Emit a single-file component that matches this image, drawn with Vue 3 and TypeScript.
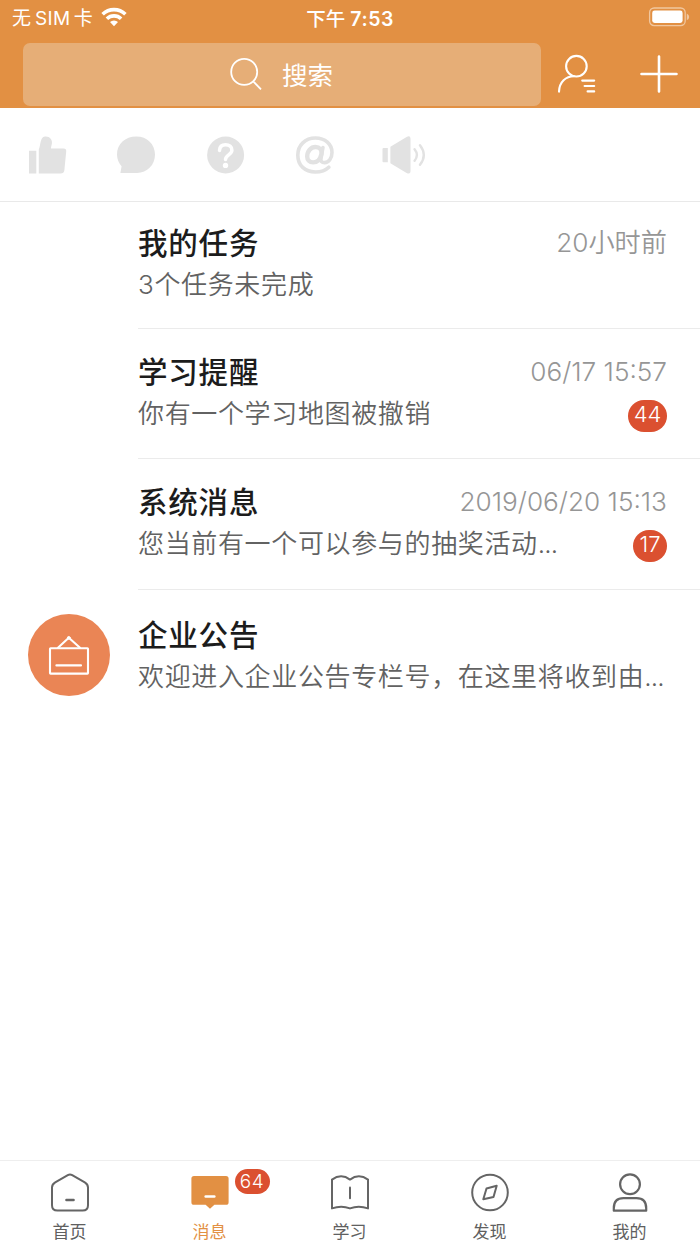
<script setup lang="ts">
interface Message {
  id: string
  title: string
  text: string
  truncated?: boolean
  time?: string
  unread?: number
  avatar?: boolean
}

interface Tab {
  id: string
  label: string
  badge?: number
}

const messages: Message[] = [
  { id: 'tasks', title: '我的任务', text: '3个任务未完成', time: '20小时前' },
  { id: 'study', title: '学习提醒', text: '你有一个学习地图被撤销', time: '06/17 15:57', unread: 44 },
  { id: 'system', title: '系统消息', text: '您当前有一个可以参与的抽奖活动', truncated: true, time: '2019/06/20 15:13', unread: 17 },
  { id: 'notice', title: '企业公告', text: '欢迎进入企业公告专栏号，在这里将收到由', truncated: true, avatar: true },
]

const tabs: Tab[] = [
  { id: 'home', label: '首页' },
  { id: 'message', label: '消息', badge: 64 },
  { id: 'learn', label: '学习' },
  { id: 'discover', label: '发现' },
  { id: 'me', label: '我的' },
]

const activeTab = 'message'
</script>

<template>
  <div class="screen">
    <header class="header">
      <div class="status">
        <div class="carrier">
          <span class="carrier-name">无<span class="sim">SIM</span>卡</span>
          <svg class="wifi" width="26" height="20" viewBox="0 0 26 20">
            <g fill="none" stroke="#fff" stroke-width="3.6">
              <path d="M1.6 7.2A16.4 16.4 0 0 1 24.4 7.2" />
              <path d="M5.9 11.8A10.2 10.2 0 0 1 20.1 11.8" />
            </g>
            <path d="M9 15a5.8 5.8 0 0 1 8 0L13 19.2z" fill="#fff" />
          </svg>
        </div>
        <div class="clock">下午 <span>7:53</span></div>
        <svg class="battery" width="42" height="20" viewBox="0 0 42 20">
          <rect x="1.6" y="1" width="35.6" height="17.6" rx="4.5" fill="none" stroke="#f1c79f" stroke-width="1.3" />
          <rect x="4.2" y="3.6" width="30.4" height="12.4" rx="2.4" fill="#fff" />
          <path d="M38.8 6.6q2.4 1.2 2.4 3.3t-2.4 3.3z" fill="#f1c79f" />
        </svg>
      </div>
      <div class="toolbar">
        <div class="search">
          <svg width="34" height="34" viewBox="0 0 34 34" fill="none" stroke="#fff" stroke-width="1.8">
            <circle cx="15.2" cy="14.9" r="13" />
            <path d="M24.2 24.3 32 32.3" />
          </svg>
          <span>搜索</span>
        </div>
        <svg class="contacts" width="40" height="40" viewBox="0 0 40 40" fill="none" stroke="#fff" stroke-width="2.1" stroke-linecap="round">
          <circle cx="19.4" cy="12.2" r="10.3" />
          <path d="M2 37.6C2.4 28 8.8 22.3 17 22.3M25.2 26.6H37.2M27.6 32H37.2M30.6 37.4H37.2" />
        </svg>
        <svg class="plus" width="38" height="38" viewBox="0 0 38 38" stroke="#fff" stroke-width="2.6" stroke-linecap="round">
          <path d="M1.5 19H36.5M19 1.5V36.5" />
        </svg>
      </div>
    </header>

    <nav class="filters">
      <svg width="38" height="38" viewBox="0 0 38 38" fill="#e2e2e2">
        <path d="M0 14.7H7.3V37.6H0zM9.8 37.6V13.6C10.8 11.2 11 8.6 11.8 5.3C12.8 1.6 14.2 .4 16.8 .4C20.9 .4 23.6 3.9 22.9 7.6C22.6 9.5 22 11 22 12.6H34.6Q37.5 12.6 37.2 15.6L35.4 34Q35 37.6 31.6 37.6z" />
      </svg>
      <svg width="38" height="38" viewBox="0 0 38 38" fill="#e2e2e2">
        <path d="M3.4 36.9 4.6 30.3A18.2 18.2 0 0 1 0 18.5C0 8 8.2 .4 19.2 .4C30.2 .4 38 8.1 38 18.6C38 29.1 30.2 36.9 20 36.9z" />
      </svg>
      <svg width="38" height="38" viewBox="0 0 38 38">
        <circle cx="18.6" cy="19" r="18.5" fill="#e2e2e2" />
        <path d="M12.5 14.4C12.7 10.7 15.2 8.8 18.6 8.8C22.2 8.8 24.9 10.8 24.9 14.2C24.9 18.8 18.5 18.8 18.5 23.4" fill="none" stroke="#fff" stroke-width="3.5" stroke-linecap="round" />
        <circle cx="18.5" cy="29.4" r="2.7" fill="#fff" />
      </svg>
      <svg width="38" height="38" viewBox="0 0 38 38" fill="none" stroke="#e2e2e2" stroke-linecap="round">
        <path d="M32.8 31.2C29.4 34.6 24.8 36 19.4 36C9 36 1.8 29.4 1.8 19.2C1.8 9.2 9.2 2 19.4 2C29.2 2 36 8.2 36 16.4C36 22.8 32.4 26.6 28.6 26.6C25.6 26.6 24.6 25.2 25 22.4L26.9 11.6" stroke-width="3.6" />
        <path d="M25.4 18.2C24.2 23.4 21 26.4 17.2 26.4C13.4 26.4 11.2 24 11.2 20.4C11.2 15 15 11 19.4 11C23.6 11 26.2 13.6 25.4 18.2" stroke-width="4.4" />
      </svg>
      <svg width="44" height="38" viewBox="0 0 44 38">
        <path d="M1.5 12H5.8V26.2H1.5Q.5 26.2 .5 25.2V13Q.5 12 1.5 12zM8.4 10.8 24.6.9Q28.5-.8 28.5 2.8V35.2Q28.5 38.8 24.6 37L8.4 27.2z" fill="#e2e2e2" />
        <path d="M32.6 13.2Q37.2 19 32.6 24.8M38 9.2Q45.6 19 38 28.8" fill="none" stroke="#e2e2e2" stroke-width="2.4" stroke-linecap="round" />
      </svg>
    </nav>

    <main class="list">
      <article v-for="m in messages" :key="m.id" class="row">
        <div class="avatar-slot">
          <div v-if="m.avatar" class="avatar">
            <svg width="42" height="42" viewBox="0 0 42 42" fill="none" stroke="#fff" stroke-width="2.1" stroke-linejoin="round" stroke-linecap="round">
              <rect x="2" y="14.2" width="38" height="25.4" rx=".6" />
              <path d="M10 13.8 20.8 3.8 32 13.8M8.4 31.4H33" />
              <circle cx="20.8" cy="3.9" r="1.4" fill="#fff" stroke-width="1" />
            </svg>
          </div>
        </div>
        <div class="body">
          <div class="line">
            <h2>{{ m.title }}</h2>
            <time v-if="m.time">{{ m.time }}</time>
          </div>
          <div class="line">
            <p>{{ m.text }}<span v-if="m.truncated" class="dots">...</span></p>
            <span v-if="m.unread" class="badge" :class="m.id">{{ m.unread }}</span>
          </div>
        </div>
      </article>
    </main>

    <footer class="tabs">
      <div v-for="t in tabs" :key="t.id" class="tab" :class="{ active: t.id === activeTab }">
        <div class="icon">
          <svg width="40" height="40" viewBox="0 0 40 40" fill="none" stroke="#656565" stroke-width="2" stroke-linejoin="round" stroke-linecap="round">
            <template v-if="t.id === 'home'">
              <path d="M17.8 2.1Q20 .9 22.2 2.1L34.8 9.4Q38 11.3 38 14.6V32.2Q38 37.5 32.6 37.5H7.4Q2 37.5 2 32.2V14.6Q2 11.3 5.2 9.4z" />
              <path d="M16.4 27H23.6" stroke-width="2.4" />
            </template>
            <template v-else-if="t.id === 'message'">
              <path d="M4 3H36Q38.6 3 38.6 5.6V29.2Q38.6 31.8 36 31.8H24.4L20 35.8 15.6 31.8H4Q1.4 31.8 1.4 29.2V5.6Q1.4 3 4 3z" fill="#e29043" stroke="none" />
              <path d="M15.6 23.5H24.4" stroke="#fff" stroke-width="2.4" />
            </template>
            <template v-else-if="t.id === 'learn'">
              <path d="M2 6.6Q11.2.1 20 6.6 28.8.1 38 6.6V35.4Q28.6 32 20 35.4 11.4 32 2 35.4z" />
              <path d="M20 14.5V25.2" />
            </template>
            <template v-else-if="t.id === 'discover'">
              <circle cx="20" cy="19.5" r="17.8" />
              <path d="M26.7 12.8 23.5 24 13.3 26.2 16.5 15.5z" />
            </template>
            <template v-else>
              <circle cx="20" cy="11.2" r="9.9" stroke-width="2.2" />
              <path d="M3.8 37.7V35.2Q3.8 25.1 13.5 25.1H26.5Q36.2 25.1 36.2 35.2V37.7z" stroke-width="2.2" />
            </template>
          </svg>
          <span v-if="t.badge" class="tab-badge">{{ t.badge }}</span>
        </div>
        <span class="label">{{ t.label }}</span>
      </div>
    </footer>
  </div>
</template>

<style>
body {
  margin: 0;
  background: #fff;
}
</style>

<style scoped>
.screen {
  display: flex;
  flex-direction: column;
  width: 700px;
  height: 1244px;
  overflow: hidden;
  background: #fff;
  font-family: Inter, "Noto Sans CJK SC", sans-serif;
  white-space: nowrap;
}

.header {
  height: 108px;
  flex: none;
  background: #e29043;
  color: #fff;
}

.status {
  display: grid;
  grid-template-columns: 1fr auto 1fr;
  height: 36px;
  align-items: center;
  box-sizing: border-box;
  padding: 0 10px 0 12px;
}

.carrier {
  display: flex;
  align-items: center;
  gap: 9px;
  font-size: 19px;
  line-height: 36px;
}

.carrier-name {
  width: 80px;
  padding-top: 1px;
}

.sim {
  margin: 0 3px 0 4px;
  letter-spacing: 0.4px;
}

.wifi {
  margin-top: -3px;
}

.clock {
  margin-left: -2px;
  font-size: 19.5px;
  font-weight: 500;
  line-height: 36px;
}

.clock span {
  font-weight: 600;
  letter-spacing: 0.5px;
}

.battery {
  justify-self: end;
  margin-top: -3px;
}

.toolbar {
  display: flex;
  height: 72px;
}

.search {
  display: flex;
  align-items: center;
  box-sizing: border-box;
  width: 518px;
  height: 63px;
  margin: 7px 0 0 23px;
  padding-left: 206px;
  gap: 19px;
  border-radius: 7px;
  background: #e6ae77;
  font-size: 25.5px;
  line-height: 63px;
}

.search svg {
  margin-top: -2px;
}

.search span {
  padding-top: 1px;
}

.contacts {
  margin: 18px 0 0 16px;
}

.plus {
  margin: 19px 0 0 43px;
}

.filters {
  display: flex;
  flex: none;
  box-sizing: border-box;
  height: 94px;
  padding: 28px 0 0 29px;
  gap: 51px;
  border-bottom: 1px solid #e9e9e9;
}

.filters svg:nth-child(2) {
  margin-left: -1px;
}

.filters svg:nth-child(3) {
  margin-left: 1px;
}

.filters svg:nth-child(5) {
  margin-left: -3px;
}

.list {
  flex: 1;
}

.row {
  display: flex;
  height: 127px;
}

.row:nth-child(2) {
  height: 130px;
}

.row:nth-child(3) {
  height: 131px;
}

.avatar-slot {
  width: 110px;
  margin-right: 28px;
}

.avatar {
  display: flex;
  align-items: center;
  justify-content: center;
  width: 82px;
  height: 82px;
  margin: 23.5px 0 0 28px;
  border-radius: 50%;
  background: #ea8555;
}

.body {
  flex: 1;
  box-sizing: border-box;
  padding: 19px 33px 0 0;
  border-bottom: 1px solid #ebebeb;
}

.row:nth-child(2) .body {
  padding-top: 21px;
}

.row:nth-child(3) .body {
  padding-top: 21px;
}

.row:nth-child(4) .body {
  padding-top: 23px;
  border-bottom: 0;
}

.line {
  display: flex;
  justify-content: space-between;
  height: 42px;
}

h2 {
  margin: 0;
  color: #1c1c1c;
  font-size: 29.5px;
  font-weight: 500;
  letter-spacing: 0.8px;
  line-height: 44px;
}

p {
  margin: 0;
  color: #626262;
  font-size: 26px;
  font-weight: 350;
  letter-spacing: 0.65px;
  line-height: 44px;
}

.dots {
  letter-spacing: -0.9px;
}

time {
  color: #969696;
  font-size: 26.2px;
  font-weight: 350;
  line-height: 43px;
}

.badge {
  width: 39px;
  height: 32px;
  margin-top: 8px;
  border-radius: 16px;
  background: #db5030;
  color: #fff;
  font-size: 22px;
  font-weight: 300;
  line-height: 29px;
  text-align: center;
}

.badge.system {
  width: 34px;
}

.tabs {
  display: flex;
  flex: none;
  box-sizing: border-box;
  height: 84px;
  border-top: 1px solid #eee;
}

.tab {
  display: flex;
  flex: 1;
  flex-direction: column;
  align-items: center;
  padding: 12px 1px 0 0;
  color: #606060;
}

.icon {
  position: relative;
  height: 40px;
}

.tab-badge {
  position: absolute;
  top: -4px;
  left: 45px;
  width: 35px;
  height: 25px;
  border-radius: 13px;
  background: #db5030;
  color: #fff;
  font-size: 19px;
  font-weight: 300;
  letter-spacing: 0.5px;
  line-height: 25px;
  text-align: center;
}

.label {
  margin-top: 5px;
  font-size: 17px;
  line-height: 29px;
}

.active {
  color: #e29043;
}
</style>
